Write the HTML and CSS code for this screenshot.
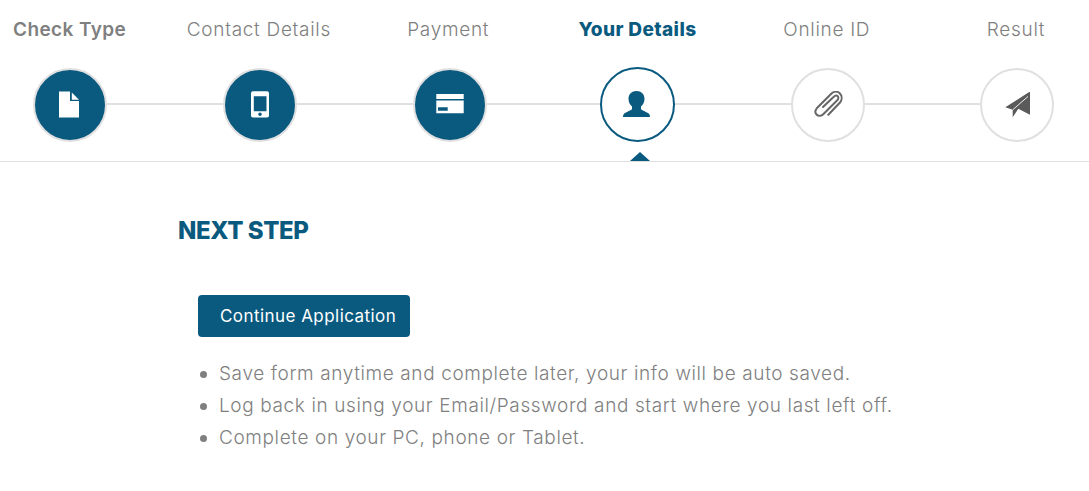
FILE: index.html
```html
<!DOCTYPE html>
<html lang="en">
<head>
<meta charset="utf-8">
<title>Your Details</title>
<link rel="stylesheet" href="styles.css">
</head>
<body>
<header class="stepper">
  <div class="labels">
    <span class="label label-done">Check Type</span>
    <span class="label">Contact Details</span>
    <span class="label">Payment</span>
    <span class="label label-active">Your Details</span>
    <span class="label">Online ID</span>
    <span class="label">Result</span>
  </div>
  <div class="track">
    <div class="circle circle-done">
      <svg class="icon" width="22" height="28" viewBox="0 0 22 28"><path fill="#fff" d="M0 .5h11v9.500h9V26.500H0z"/><path fill="#fff" d="M12.800 1.500L20 8.700h-7.200z"/></svg>
    </div>
    <span class="link"></span>
    <div class="circle circle-done">
      <svg class="icon" width="20" height="28" viewBox="0 0 20 28"><path fill="#fff" fill-rule="evenodd" d="M3 .3h14A2 2 0 0 1 19 2.300v22.200a2 2 0 0 1-2 2H3a2 2 0 0 1-2-2V2.300A2 2 0 0 1 3 .3zM3.800 5.200v15H16.500v-15zM10 21.400a1.800 1.800 0 1 0 0 3.600a1.800 1.800 0 0 0 0-3.600z"/></svg>
    </div>
    <span class="link"></span>
    <div class="circle circle-done">
      <svg class="icon" width="28" height="22" viewBox="0 0 28 22"><path fill="#fff" fill-rule="evenodd" d="M.3 0H27.700V5H.3zM.3 6.500H27.700V19.200H.3zM2 13.200v3.600h9.700v-3.600z"/></svg>
    </div>
    <span class="link"></span>
    <div class="circle circle-active">
      <svg class="icon" width="28" height="27" viewBox="0.500 0 28 27"><path fill="#0a5a80" d="M14 0c4.800 0 8 3.200 8 8c0 3-1.400 5.800-3.500 7.500v2.500c0 1 4.500 2.500 7 4c1.500 1 2 2.300 2 4H.500c0-1.700.5-3 2-4c2.500-1.500 7-3 7-4v-2.500C7.400 13.800 6 11 6 8c0-4.800 3.200-8 8-8z"/></svg>
    </div>
    <span class="link"></span>
    <div class="circle">
      <svg class="icon" width="30" height="28" viewBox="0 0 30 28"><path fill="none" stroke="#666" stroke-width="2" stroke-linecap="round" stroke-linejoin="round" d="M15.300 23.800L27 11.500C29.500 8.500 29 4.500 26.500 2C24 0 20.500.5 18 3L4 17C2 19.500 2 22 3.500 23.500C5.500 25.500 8.500 25 10.500 23L24 9.500C26 7.500 25.500 6 24.500 5C23.500 4 22 4.500 20.500 6L10 16"/></svg>
    </div>
    <span class="link"></span>
    <div class="circle">
      <svg class="icon" width="26" height="26" viewBox="0 0 26 26"><path fill="#5a5a5a" d="M26 -.5L1.300 15.200L8.700 17.800V25.200L14.300 16.800L26 22.800z"/><path fill="none" stroke="#fff" stroke-width=".9" d="M24 4.500L8.700 17.800"/></svg>
    </div>
  </div>
  <span class="caret"></span>
</header>
<main class="content">
  <h2 class="title">NEXT STEP</h2>
  <div class="panel">
    <button class="button" type="button">Continue Application</button>
    <ul class="notes">
      <li>Save form anytime and complete later, your info will be auto saved.</li>
      <li>Log back in using your Email/Password and start where you last left off.</li>
      <li>Complete on your PC, phone or Tablet.</li>
    </ul>
  </div>
</main>
</body>
</html>
```

FILE: styles.css
```css
* { box-sizing: border-box; }
html, body { margin: 0; padding: 0; background: #fff; }
body { font-family: "Inter", "Open Sans", sans-serif; color: #888; overflow: hidden; }

.stepper {
  position: relative;
  height: 162px;
  padding: 18px 34.600px 0 33px;
  border-bottom: 1px solid #e0e0e0;
}
.labels { display: flex; justify-content: space-between; height: 50px; margin: 0 1.400px 0 -.4px; }
.label {
  width: 74px;
  display: flex;
  justify-content: center;
  white-space: nowrap;
  font-size: 19px;
  line-height: 24px;
  font-weight: 300;
  letter-spacing: .7px;
  color: #808080;
}
.label-done { font-weight: 600; letter-spacing: .4px; }
.label-active { font-weight: 800; letter-spacing: .4px; color: #0a5a80; }

.track { display: flex; align-items: flex-start; height: 74px; }
.link { flex: 1; height: 2px; margin-top: 35px; background: #e0e0e0; }
.circle {
  width: 74px;
  height: 74px;
  flex: none;
  display: flex;
  align-items: center;
  justify-content: center;
  border-radius: 50%;
  border: 2px solid #e0e0e0;
  background: #fff;
}
.circle-done { background: #0a5a80; }
.circle-active {
  border-color: #0a5a80;
  width: 75px;
  height: 75px;
  margin: -1px 0 0 -2.500px;
}

.caret {
  position: absolute;
  left: 630px;
  bottom: 0;
  width: 0;
  height: 0;
  border-left: 10px solid transparent;
  border-right: 10px solid transparent;
  border-bottom: 9px solid #0a5a80;
}

.content { padding: 51px 0 0 178px; }
.title {
  margin: 0;
  font-size: 24px;
  line-height: 36px;
  font-weight: 800;
  letter-spacing: -.4px;
  color: #0a5a80;
}
.panel { padding: 46px 0 0 20px; }
.button {
  display: block;
  width: 212px;
  height: 42px;
  padding: 0 0 0 22px;
  text-align: left;
  border: 0;
  border-radius: 4px;
  background: #0a5a80;
  color: #fff;
  font-family: inherit;
  font-size: 17px;
  font-weight: 400;
  letter-spacing: .45px;
}
.notes {
  list-style: none;
  margin: 21px 0 0;
  padding: 0 0 0 2px;
  font-size: 19px;
  line-height: 32px;
  font-weight: 300;
  letter-spacing: .62px;
  color: #808080;
}
.notes li { display: flex; align-items: center; gap: 12px; }
.notes li::before {
  content: "";
  flex: none;
  width: 7px;
  height: 7px;
  border-radius: 50%;
  background: #808080;
}
```
